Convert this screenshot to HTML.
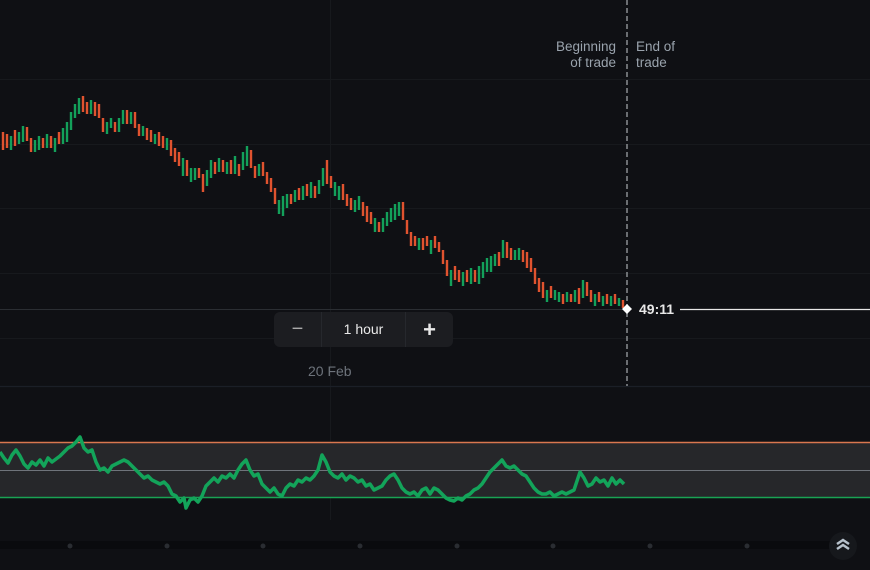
<!DOCTYPE html>
<html><head><meta charset="utf-8"><style>
html,body{margin:0;padding:0;background:#0f1014;width:870px;height:570px;overflow:hidden;font-family:"Liberation Sans",sans-serif}
svg{position:absolute;left:0;top:0}
.lbl{position:absolute;color:#9aa3ad;font-size:13.5px;line-height:16px}
.ctrl{position:absolute;left:274px;top:312px;width:179px;height:35px;background:#1c1d21;border-radius:6px;color:#e8e8e8;font-size:14px}
.ctrl div{position:absolute;top:0;height:35px;line-height:35px;text-align:center}
</style></head><body>
<svg width="870" height="570">
<g stroke="#17191d" stroke-width="1">
<line x1="0" y1="79.5" x2="870" y2="79.5"/>
<line x1="0" y1="144.5" x2="870" y2="144.5"/>
<line x1="0" y1="208.5" x2="870" y2="208.5"/>
<line x1="0" y1="273.5" x2="870" y2="273.5"/>
<line x1="0" y1="338.5" x2="870" y2="338.5"/>
<line x1="330.5" y1="0" x2="330.5" y2="520"/>
</g>
<line x1="0" y1="386.5" x2="870" y2="386.5" stroke="#1b1f27" stroke-width="1.2"/>
<line x1="0" y1="309.5" x2="627" y2="309.5" stroke="#2b2e33" stroke-width="1"/>
<line x1="680" y1="309.5" x2="870" y2="309.5" stroke="#e8e8e8" stroke-width="1.3"/>
<line x1="627" y1="0" x2="627" y2="386" stroke="#8a8d92" stroke-width="1.5" stroke-dasharray="5,3"/>
<rect x="0" y="443" width="870" height="55" fill="#26272a"/>
<line x1="0" y1="442.5" x2="870" y2="442.5" stroke="#d9774f" stroke-width="1.5"/>
<line x1="0" y1="470.5" x2="870" y2="470.5" stroke="#6f747b" stroke-width="1"/>
<line x1="0" y1="497.5" x2="870" y2="497.5" stroke="#19a354" stroke-width="1.5"/>
<path stroke="#e0532f" stroke-width="2.4" fill="none" d="M3 132v18M7 134v14M15 130v16M27 127v14M31 138v14M43 138v10M51 136v12M59 132v12M83 96v16M87 102v12M95 102v14M99 104v14M103 118v14M115 122v10M127 110v14M135 112v16M139 124v12M147 128v12M151 130v12M159 132v14M163 136v12M171 140v16M175 148v14M179 152v14M187 160v16M199 168v10M203 174v18M215 162v12M223 160v12M231 160v14M239 164v12M251 150v18M255 166v12M263 162v14M267 172v12M271 178v14M275 188v16M291 194v10M299 188v12M307 184v12M315 186v12M327 160v24M331 176v12M343 184v16M347 194v12M351 198v12M363 202v14M367 206v16M371 212v12M379 222v10M403 202v18M407 220v14M411 232v14M415 236v10M423 238v12M427 236v10M435 236v12M439 242v10M443 250v14M447 260v16M455 266v14M459 270v12M467 270v12M475 270v12M499 252v14M507 242v16M511 248v12M523 250v12M527 252v16M531 258v14M535 268v16M539 278v14M543 282v16M551 286v12M563 294v10M571 294v8M579 288v16M587 282v14M591 290v12M599 292v10M607 294v10M615 294v10M623 300v8"/>
<path stroke="#13a05a" stroke-width="2.4" fill="none" d="M11 136v14M19 132v12M23 126v16M35 140v12M39 136v14M47 134v14M55 138v14M63 128v16M67 122v20M71 112v18M75 104v14M79 98v16M91 100v14M107 122v12M111 118v10M119 118v14M123 110v14M131 112v12M143 126v10M155 134v10M167 138v12M183 158v18M191 168v14M195 168v12M207 170v16M211 160v18M219 158v14M227 162v12M235 156v18M243 152v18M247 146v20M259 164v12M279 200v14M283 196v20M287 194v14M295 190v12M303 186v14M311 182v16M319 180v14M323 168v18M335 182v14M339 186v14M355 200v12M359 196v14M375 218v14M383 218v14M387 212v14M391 208v14M395 204v16M399 202v14M419 238v12M431 240v14M451 270v16M463 272v14M471 268v16M479 266v18M483 262v16M487 258v14M491 256v16M495 254v12M503 240v18M515 250v10M519 248v12M547 290v12M555 290v10M559 292v10M567 292v10M575 290v12M583 280v18M595 294v12M603 296v10M611 296v10M619 298v8"/>
<polyline fill="none" stroke="#13a45a" stroke-width="3.5" stroke-linejoin="round" points="0,452 4,458 8,463 12,455 16,450 20,456 24,464 28,468 32,462 36,465 40,460 44,466 48,458 52,462 56,459 60,456 64,452 68,448 72,446 76,442 80,437 84,448 88,452 92,450 96,462 100,470 104,468 108,472 112,466 116,464 120,462 124,460 128,462 132,466 136,470 140,474 144,478 148,476 152,480 156,482 160,484 164,482 168,486 172,494 176,496 180,502 184,498 186,508 190,500 194,498 198,502 202,496 206,486 210,482 214,478 218,482 222,476 226,478 230,474 234,478 238,470 242,464 246,460 250,470 254,476 258,474 262,484 266,488 270,492 274,488 278,494 282,496 286,488 290,484 294,486 298,480 302,482 306,478 310,480 314,476 318,470 322,455 326,462 330,472 334,476 338,478 342,474 346,480 350,476 354,478 358,482 362,480 366,486 370,484 374,490 378,488 382,486 386,480 390,476 394,474 398,480 402,488 406,492 410,494 414,492 418,496 422,490 426,488 430,494 434,488 438,490 442,494 446,498 450,500 454,501 458,498 462,500 466,496 470,494 474,490 478,488 482,484 486,478 490,472 494,468 498,464 502,460 506,466 510,468 514,466 518,470 522,474 526,476 530,482 534,488 538,492 542,494 546,494 550,492 554,496 558,494 562,492 566,494 570,492 574,490 576,484 580,472 584,478 588,486 592,484 596,478 600,482 604,480 608,486 612,478 616,484 620,480 624,484"/>
<rect x="0" y="541" width="830" height="8" fill="#0a0b0e"/>
<g fill="#2a2d32"><circle cx="70" cy="546" r="2.5"/><circle cx="167" cy="546" r="2.5"/><circle cx="263" cy="546" r="2.5"/><circle cx="360" cy="546" r="2.5"/><circle cx="457" cy="546" r="2.5"/><circle cx="553" cy="546" r="2.5"/><circle cx="650" cy="546" r="2.5"/><circle cx="747" cy="546" r="2.5"/></g>
<circle cx="843" cy="546" r="14" fill="#16181c"/>
<path d="M837 544 L843 540 L849 544 M837 549 L843 545 L849 549" stroke="#b7c2cc" stroke-width="2.5" fill="none"/>
<path d="M627 304 L632 309 L627 314 L622 309Z" fill="#fff"/>
</svg>
<div class="lbl" style="right:254px;top:39px;text-align:right">Beginning<br>of trade</div>
<div class="lbl" style="left:636px;top:39px">End of<br>trade</div>
<div style="position:absolute;left:639px;top:301px;color:#e8e8e8;font-size:14px;font-weight:bold">49:11</div>
<div class="ctrl">
<div style="left:0;width:47px;font-size:20px;color:#aaa">−</div>
<div style="left:47px;width:1px;background:#26282d"></div>
<div style="left:48px;width:83px">1 hour</div>
<div style="left:131px;width:1px;background:#26282d"></div>
<div style="left:132px;width:47px;font-size:22px;font-weight:bold">+</div>
</div>
<div style="position:absolute;left:308px;top:363px;color:#6d737b;font-size:14px">20 Feb</div>
</body></html>
